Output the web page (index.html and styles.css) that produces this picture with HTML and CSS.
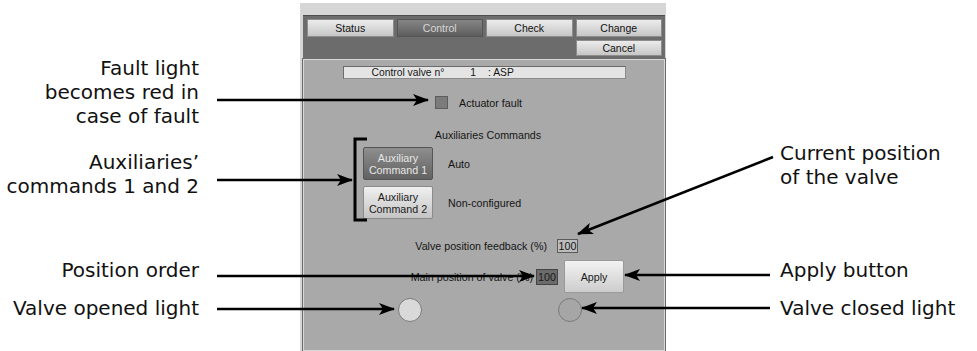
FILE: index.html
```html
<!DOCTYPE html>
<html lang="en">
<head>
    <meta charset="UTF-8">
    <title>Control valve - control tab</title>
    <link rel="stylesheet" href="styles.css">
</head>
<body>

<div class="figure">

    <!-- callouts on the left -->
    <div class="notes notes-left">
        <p class="note note-fault">Fault light<br>becomes red in<br>case of fault</p>
        <p class="note note-aux">Auxiliaries’<br>commands 1 and 2</p>
        <p class="note note-order">Position order</p>
        <p class="note note-opened">Valve opened light</p>
    </div>

    <!-- the control window -->
    <div class="window">
        <div class="tabbar">
            <button class="tab">Status</button>
            <button class="tab active">Control</button>
            <button class="tab">Check</button>
            <button class="tab">Change</button>
            <button class="tab tab-cancel">Cancel</button>
        </div>

        <div class="content">
            <div class="title-box">
                <span class="title-name">Control valve n°</span>
                <span class="title-num">1</span>
                <span class="title-tag">: ASP</span>
            </div>

            <div class="fault-row">
                <span class="fault-light"></span>
                <span>Actuator fault</span>
            </div>

            <div class="aux-title">Auxiliaries Commands</div>

            <div class="aux-list">
                <div class="aux-row">
                    <button class="aux-btn on">Auxiliary<br>Command 1</button>
                    <span class="aux-state">Auto</span>
                </div>
                <div class="aux-row">
                    <button class="aux-btn">Auxiliary<br>Command 2</button>
                    <span class="aux-state">Non-configured</span>
                </div>
            </div>

            <div class="feedback-row">
                <span class="field-label feedback-label">Valve position feedback (%)</span>
                <span class="value">100</span>
            </div>

            <div class="order-row">
                <span class="field-label order-label">Main position of valve (%)</span>
                <span class="value value-order">100</span>
                <button class="apply">Apply</button>
            </div>

            <div class="lights-row">
                <span class="lamp opened"></span>
                <span class="lamp closed"></span>
            </div>
        </div>
    </div>

    <!-- callouts on the right -->
    <div class="notes notes-right">
        <p class="note note-current">Current position<br>of the valve</p>
        <p class="note note-apply">Apply button</p>
        <p class="note note-closed">Valve closed light</p>
    </div>

    <!-- leader lines drawn over the screenshot -->
    <svg class="leaders" width="977" height="351" viewBox="0 0 977 351">
        <defs>
            <marker id="head" markerUnits="userSpaceOnUse" markerWidth="16" markerHeight="12"
                    refX="15" refY="6" orient="auto">
                <path d="M0,0 L16,6 L0,12 L4,6 Z" fill="#000"/>
            </marker>
        </defs>
        <g stroke="#000" stroke-width="2.5" fill="none">
            <line x1="217" y1="100" x2="428" y2="100" marker-end="url(#head)"/>
            <line x1="217" y1="180" x2="352" y2="180" marker-end="url(#head)"/>
            <path d="M367,139 H355 V220 H367" stroke-width="3"/>
            <line x1="217" y1="276" x2="534" y2="276" marker-end="url(#head)"/>
            <line x1="217" y1="309" x2="394" y2="309" marker-end="url(#head)"/>
            <line x1="773" y1="157" x2="578" y2="234" marker-end="url(#head)"/>
            <line x1="770" y1="275" x2="625" y2="275" marker-end="url(#head)"/>
            <line x1="770" y1="308" x2="582" y2="308" marker-end="url(#head)"/>
        </g>
    </svg>
</div>

</body>
</html>
```

FILE: styles.css
```css
body {
    margin: 0;
    background-color: #fff;
    color: #111;
}

.figure {
    position: relative;
    display: flex;
    width: 977px;
    height: 351px;
    overflow: hidden;
}

/* callouts */
.notes {
    display: flex;
    flex-direction: column;
    font-family: "DejaVu Sans", "Open Sans", sans-serif;
    font-size: 20px;
    line-height: 24px;
    color: #111;
}

.note {
    margin: 0;
    white-space: nowrap;
}

.notes-left {
    width: 199px;
    margin-right: 101px;
    text-align: right;
}

.notes-right {
    margin-left: 114px;
}

.note-fault   { margin-top: 56px; }
.note-aux     { margin-top: 22px; }
.note-order   { margin-top: 60px; }
.note-opened  { margin-top: 14px; }

.note-current { margin-top: 141px; }
.note-apply   { margin-top: 69px; }
.note-closed  { margin-top: 14px; }

.leaders {
    position: absolute;
    left: 0;
    top: 0;
    pointer-events: none;
}

/* window */
.window {
    display: flex;
    flex-direction: column;
    width: 366px;
    height: 348px;
    margin-top: 3px;
    padding: 12px 1px 0 3px;
    box-sizing: border-box;
    background-color: #d6d6d6;
    font-family: "Liberation Sans", Arial, sans-serif;
    font-size: 10.7px;
}

.tabbar {
    display: grid;
    grid-template-columns: repeat(4, 1fr);
    gap: 3px;
    padding: 3px 3px 3px 4px;
    background-color: #6c6c6c;
    border-top: 1px solid #4e4e4e;
}

.tab {
    height: 18px;
    padding: 0;
    font-family: inherit;
    font-size: 10.5px;
    color: #111;
    background: linear-gradient(#ececec, #c6c6c6);
    border: 1px solid #8c8c8c;
}

.tab.active {
    color: #d8d8d8;
    background: linear-gradient(#858585, #5e5e5e);
    border-color: #555;
}

.tab-cancel {
    grid-column: 4;
    height: 16px;
}

.content {
    flex: 1;
    display: flex;
    flex-direction: column;
    background-color: #a9a9a9;
    border: 1px solid #d8d8d8;
    box-shadow: 0 0 0 1px #6a6a6a;
    color: #151515;
}

.title-box {
    display: flex;
    align-items: center;
    width: 283px;
    height: 13px;
    margin: 6px auto 0;
    padding-left: 28px;
    box-sizing: border-box;
    background-color: #e4e4e4;
    border: 1px solid #8a8a8a;
    border-top-color: #6a6a6a;
    border-left-color: #6a6a6a;
    font-size: 10.3px;
}

.title-num {
    margin-left: 26px;
}

.title-tag {
    margin-left: 12px;
}

.fault-row {
    display: flex;
    align-items: center;
    gap: 11px;
    margin: 17px 0 0 131px;
}

.fault-light {
    width: 11px;
    height: 11px;
    background-color: #7b7b7b;
    border: 1px solid #5c5c5c;
}

.aux-title {
    margin-top: 20px;
    padding-left: 8px;
    text-align: center;
}

.aux-list {
    display: flex;
    flex-direction: column;
    gap: 6px;
    margin: 6px 0 0 59px;
}

.aux-row {
    display: flex;
    align-items: center;
    gap: 15px;
}

.aux-btn {
    width: 70px;
    height: 33px;
    padding: 0;
    font-family: inherit;
    font-size: 10.7px;
    line-height: 12px;
    color: #1a1a1a;
    background: linear-gradient(#f0f0f0, #c4c4c4);
    border: 1px solid #8a8a8a;
    border-radius: 2px;
}

.aux-btn.on {
    color: #e6e6e6;
    background: linear-gradient(#8e8e8e, #626262);
    border-color: #555;
}

.field-label {
    white-space: nowrap;
    text-align: right;
}

.feedback-row {
    display: flex;
    align-items: center;
    gap: 10px;
    margin: 20px 0 0 109px;
}

.feedback-label {
    width: 134px;
}

.value {
    width: 19px;
    height: 12px;
    line-height: 12px;
    text-align: center;
    background-color: #bcbcbc;
    border: 1px solid #5a5a5a;
}

.order-row {
    display: flex;
    align-items: center;
    margin: 7px 0 0 104px;
}

.order-label {
    width: 125px;
}

.value-order {
    width: 20px;
    height: 14px;
    line-height: 14px;
    margin-left: 3px;
    background-color: #6b6b6b;
    border-color: #454545;
    color: #1a1a1a;
}

.apply {
    width: 60px;
    height: 33px;
    margin-left: 6px;
    padding: 0;
    font-family: inherit;
    font-size: 10.7px;
    color: #1a1a1a;
    background: linear-gradient(#f2f2f2, #cdcdcd);
    border: 1px solid #9a9a9a;
    border-radius: 2px;
}

.lights-row {
    display: flex;
    gap: 136px;
    margin: 5px 0 0 94px;
}

.lamp {
    width: 22px;
    height: 22px;
    border-radius: 50%;
    border: 1px solid #7a7a7a;
}

.lamp.opened {
    background-color: #d9d9d9;
}

.lamp.closed {
    background-color: #a6a6a6;
}
```
